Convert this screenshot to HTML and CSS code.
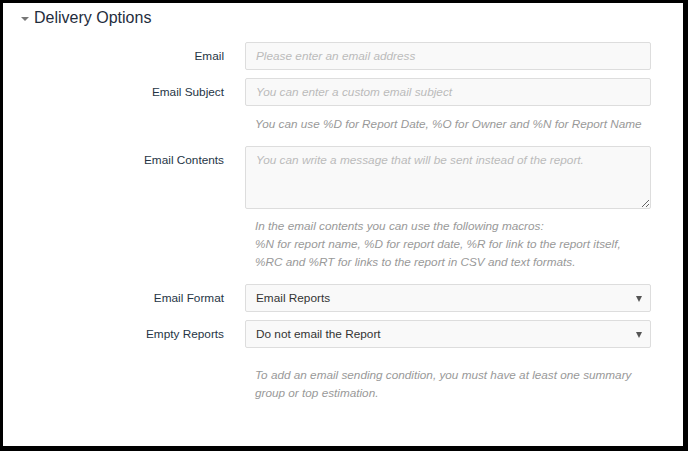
FILE: index.html
```html
<!DOCTYPE html>
<html>
<head>
<meta charset="utf-8">
<link rel="stylesheet" href="styles.css">
</head>
<body>
<div class="frame">
  <div class="section-title"><span class="caret"></span>Delivery Options</div>
  <div class="form">
    <label class="lbl">Email</label>
    <div class="ctl"><input class="field" placeholder="Please enter an email address"></div>

    <label class="lbl">Email Subject</label>
    <div class="ctl">
      <input class="field" placeholder="You can enter a custom email subject">
      <p class="help">You can use %D for Report Date, %O for Owner and %N for Report Name</p>
    </div>

    <label class="lbl">Email Contents</label>
    <div class="ctl">
      <textarea class="field area" placeholder="You can write a message that will be sent instead of the report."></textarea>
      <p class="help help-mid">In the email contents you can use the following macros:<br>%N for report name, %D for report date, %R for link to the report itself,<br>%RC and %RT for links to the report in CSV and text formats.</p>
    </div>

    <label class="lbl">Email Format</label>
    <div class="ctl"><div class="field select">Email Reports<span class="arrow"></span></div></div>

    <label class="lbl">Empty Reports</label>
    <div class="ctl">
      <div class="field select">Do not email the Report<span class="arrow"></span></div>
      <p class="help help-last">To add an email sending condition, you must have at least one summary<br>group or top estimation.</p>
    </div>
  </div>
</div>
</body>
</html>
```
FILE: styles.css
```css
html, body { margin: 0; padding: 0; }
body {
  background: #000;
  width: 688px;
  height: 451px;
  overflow: hidden;
  font-family: "Liberation Sans", Arial, sans-serif;
}
.frame {
  margin: 3px 5px 0 3px;
  height: 443px;
  background: #fff;
  box-sizing: border-box;
  padding-top: 5px;
}
.section-title {
  display: flex;
  align-items: center;
  font-size: 16px;
  color: #1f2d3d;
  padding-left: 18px;
  height: 20px;
}
.caret {
  width: 0; height: 0;
  border-left: 4px solid transparent;
  border-right: 4px solid transparent;
  border-top: 4px solid #777;
  margin-right: 5px;
  margin-top: 1px;
}
.form {
  display: grid;
  grid-template-columns: 221px 406px;
  column-gap: 21px;
  row-gap: 8px;
  margin-top: 14px;
}
.lbl {
  font-size: 11.8px;
  color: #263545;
  text-align: right;
  line-height: 28px;
  white-space: nowrap;
}
.ctl { display: flex; flex-direction: column; }
.field {
  box-sizing: border-box;
  width: 406px;
  height: 28px;
  border: 1px solid #ddd;
  border-radius: 2px;
  background: #f9f9f9;
  font-family: "Liberation Sans", Arial, sans-serif;
  font-size: 11.8px;
  padding: 0 10px;
  color: #333;
  margin: 0;
  outline: none;
}
.field::placeholder { color: #bbb; font-style: italic; }
.area {
  height: 63px;
  padding: 6px 10px;
  resize: vertical;
  display: block;
}
.select {
  display: flex;
  align-items: center;
  position: relative;
}
.arrow {
  position: absolute;
  right: 8px;
  top: 11px;
  width: 0; height: 0;
  border-left: 3px solid transparent;
  border-right: 3px solid transparent;
  border-top: 6px solid #555;
}
.help {
  margin: 9px 0 5px 10px;
  font-size: 11.75px;
  line-height: 18px;
  font-style: italic;
  color: #999;
  white-space: nowrap;
}
.help-mid { margin-top: 8px; margin-bottom: 5px; }
.help-last { margin-top: 18px; }
```
